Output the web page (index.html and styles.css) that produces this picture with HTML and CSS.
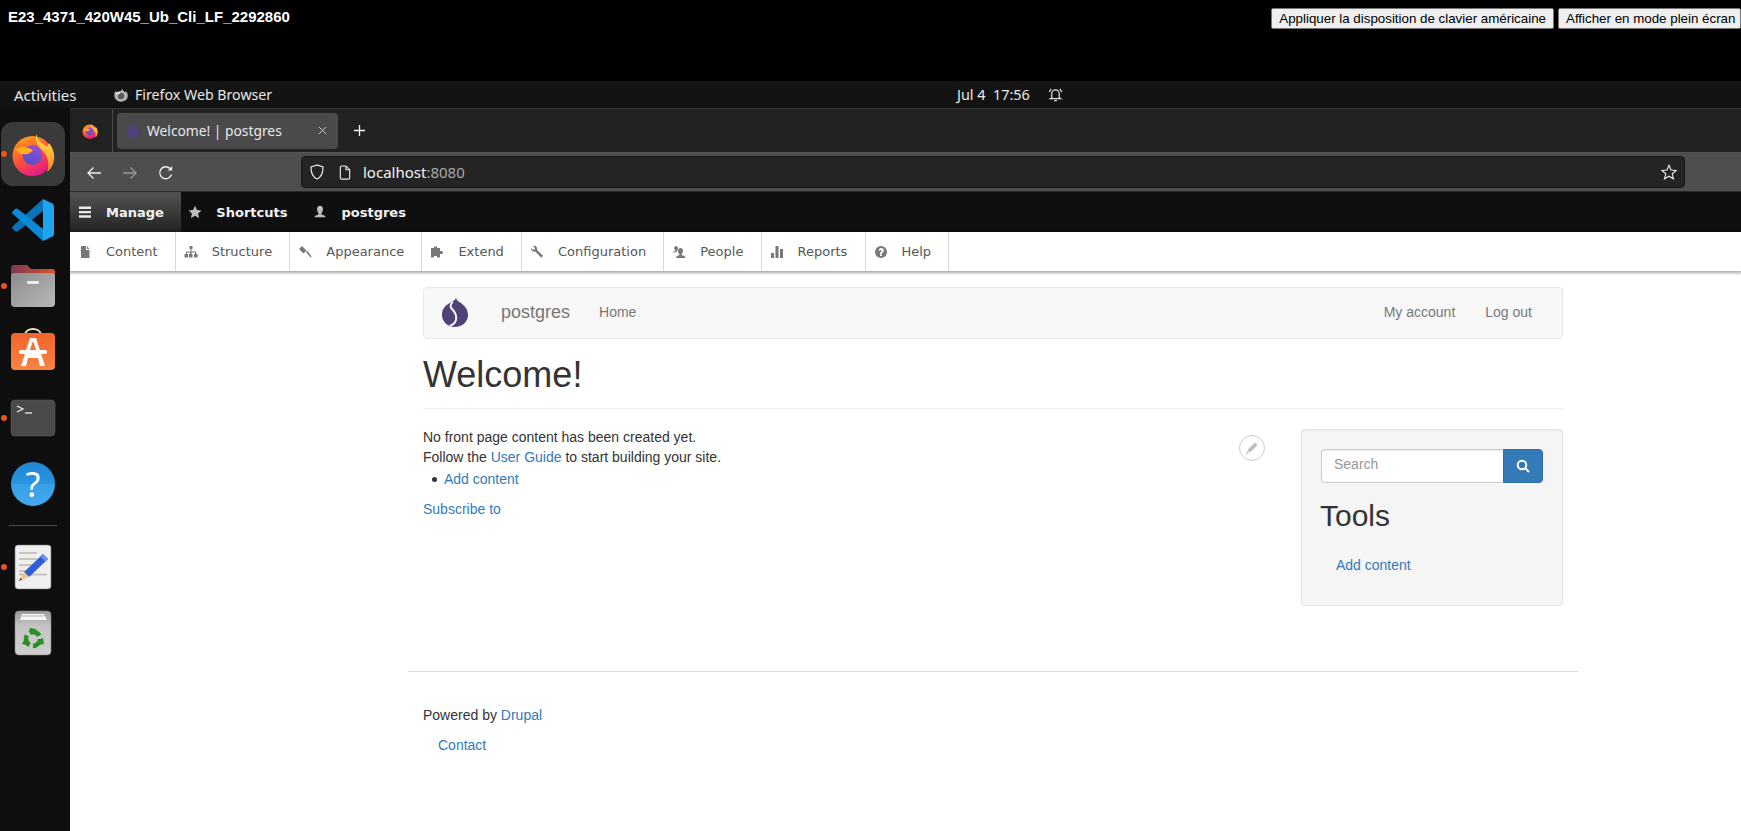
FILE: index.html
```html
<!DOCTYPE html>
<html lang="fr">
<head>
<meta charset="utf-8">
<title>Welcome! | postgres</title>
<link rel="stylesheet" href="styles.css">
</head>
<body>
<svg class="defs" width="0" height="0" aria-hidden="true">
  <defs>
    <linearGradient id="ffBody" x1="0.15" y1="0.1" x2="0.6" y2="1">
      <stop offset="0" stop-color="#ff9a1f"/><stop offset="0.5" stop-color="#ff4f3a"/><stop offset="1" stop-color="#e5178a"/>
    </linearGradient>
    <linearGradient id="ffFlame" x1="0.5" y1="0" x2="0.5" y2="1">
      <stop offset="0" stop-color="#ffe84a"/><stop offset="1" stop-color="#ff8a1f"/>
    </linearGradient>
    <linearGradient id="ffCore" x1="0.7" y1="0" x2="0.3" y2="1">
      <stop offset="0" stop-color="#9a4fd8"/><stop offset="1" stop-color="#4f4fc8"/>
    </linearGradient>
    <linearGradient id="folder" x1="0" y1="0" x2="1" y2="1">
      <stop offset="0" stop-color="#8c8c8c"/><stop offset="1" stop-color="#b8b8b8"/>
    </linearGradient>
    <linearGradient id="folderBack" x1="0" y1="0" x2="1" y2="0">
      <stop offset="0" stop-color="#7d3552"/><stop offset="1" stop-color="#d9562a"/>
    </linearGradient>
    <linearGradient id="store" x1="0" y1="0" x2="0" y2="1">
      <stop offset="0" stop-color="#f0652a"/><stop offset="1" stop-color="#f98345"/>
    </linearGradient>
    <linearGradient id="trash" x1="0" y1="0" x2="0" y2="1">
      <stop offset="0" stop-color="#9a9a9a"/><stop offset="0.35" stop-color="#c4c4c4"/><stop offset="1" stop-color="#cfcfcf"/>
    </linearGradient>
    <symbol id="firefox" viewBox="0 0 44 44">
      <circle cx="21.500" cy="24" r="20" fill="url(#ffBody)"/>
      <path d="M9 8c0 3 1 5 2 6 3-3 8-5 12-5l-3 8-16 2z" fill="#ff7a1f"/>
      <path d="M26 1c-1 5 2 8 6 11 2 1 4 3 4 3l2-4c4 5 6 11 5 17-1 5-3 9-7 12 3-8 1-16-5-22-4-4-8-9-5-17z" fill="url(#ffFlame)"/>
      <circle cx="21.500" cy="23" r="10" fill="url(#ffCore)"/>
      <path d="M5 17c5-3 13-2 17 1-2 3-6 5-10 4-3 0-6-2-7-5z" fill="#ffb01f"/>
    </symbol>
    <symbol id="drop" viewBox="0 0 26 30">
      <path d="M14 0c0 3 2 4 5 6 4 3 7 7 7 12 0 7-6 12-13 12S0 25 0 18C0 11 4 8 8 6c3-2 6-3 6-6z" fill="#4f4279"/>
      <path d="M11 5C8 7 8 10 10 12c3 3 5 6 4 11-1 3-3 5-6 5.500" fill="none" stroke="#f8f8f8" stroke-width="2"/>
    </symbol>
  </defs>
</svg>

<header class="banner">
  <div class="banner-title">E23_4371_420W45_Ub_Cli_LF_2292860</div>
  <div class="banner-actions">
    <button class="banner-btn" type="button">Appliquer la disposition de clavier américaine</button>
    <button class="banner-btn banner-btn-last" type="button">Afficher en mode plein écran</button>
  </div>
</header>

<div class="gnome-bar">
  <span class="activities">Activities</span>
  <span class="app-menu">
    <svg class="app-icon" viewBox="0 0 44 44"><path d="M26 2c1 6 6 8 10 12 1-2 1-3 1-5 5 6 7 12 6 18-1 10-10 16-21 16C10 43 1 35 1 23 1 17 3 12 6 9c0 3 1 4 2 5 4-4 15-3 18-12z" fill="#b5b5b5"/><circle cx="22" cy="25" r="10" fill="#5a5a5a"/><path d="M6 15c5-3 11-3 15 1-3 3-6 5-9 4-3 0-5-2-6-5z" fill="#e0e0e0"/></svg>
    Firefox Web Browser
  </span>
  <span class="clock">Jul 4&nbsp;&nbsp;17:56</span>
  <svg class="bell" viewBox="0 0 16 16" fill="none" stroke="#e6e6e6" stroke-width="1.300"><path d="M4 11.500V7a4 4 0 0 1 8 0v4.500l1.500 1h-11z"/><path d="M6.500 14.500h3"/><path d="M1.500 5.500C2 4 2.500 3 3.500 2M14.500 5.500C14 4 13.500 3 12.500 2"/></svg>
</div>

<div class="desktop">
  <nav class="dock">
    <div class="dock-item">
      <span class="dock-tile"><svg class="dock-ff"><use href="#firefox"/></svg></span>
      <i class="dock-dot"></i>
    </div>
    <div class="dock-item">
      <svg class="dock-icon" viewBox="-1 -1 44 44"><path d="M31 0v12L6 32q-2 1-3 0l-2-2q-2-2 0-3z" fill="#0a72b8"/><path d="M31 42V30L6 10q-2-1-3 0l-2 2q-2 2 0 3z" fill="#0b8ad8"/><path d="M31 0l9.500 4.500q1.500 1 1.500 2.500v28q0 1.500-1.500 2.500L31 42z" fill="#1fa5f0"/></svg>
    </div>
    <div class="dock-item">
      <svg class="dock-icon" viewBox="0 0 44 44"><path d="M0 4q0-3 3-3h13l4 4h21q3 0 3 3v14H0z" fill="url(#folderBack)"/><path d="M0 12q0-3 3-3h38q3 0 3 3v27q0 4-4 4H4q-4 0-4-4z" fill="url(#folder)"/><rect x="16" y="17" width="12" height="3" rx="1" fill="#eee"/></svg>
      <i class="dock-dot"></i>
    </div>
    <div class="dock-item">
      <svg class="dock-icon" viewBox="0 0 44 44"><path d="M14 5c0-8 16-8 16 0" fill="none" stroke="#f3e0b8" stroke-width="1.800"/><rect x="0" y="3" width="44" height="37" rx="4" fill="url(#store)"/><path d="M19 8h6l9 28h-5l-2-8H17l-2 8h-5zM18.500 21h7L22 11z" fill="#fff"/><rect x="8" y="20" width="28" height="4" rx="2" fill="#fff"/></svg>
    </div>
    <div class="dock-item">
      <svg class="dock-icon" viewBox="0 0 44 44"><rect x="0" y="4" width="44" height="36" rx="4" fill="#4a4a4a" stroke="#5a5a5a" stroke-width=".6"/><path d="M6 10l6 3-6 3" fill="none" stroke="#eee" stroke-width="1.300"/><path d="M14 17h7" stroke="#eee" stroke-width="1.300"/></svg>
      <i class="dock-dot"></i>
    </div>
    <div class="dock-item">
      <span class="help-badge">?</span>
    </div>
    <div class="dock-sep"></div>
    <div class="dock-item">
      <svg class="dock-icon" viewBox="0 0 44 44"><rect x="4" y="0" width="36" height="44" rx="3" fill="#efefef" stroke="#777" stroke-width=".6"/><path d="M8 8h18M8 14h18M8 20h16M8 26h12M8 29.500h28" stroke="#c9c5b8" stroke-width="1.800"/><path d="M32 9l5 5-19 18-5-5z" fill="#2f5fd8"/><path d="M32 9l5 5-2.500 2.500-5-5z" fill="#6f8fe8"/><path d="M13 27l5 5-10 4z" fill="#f2c58a"/><path d="M9.500 33l1.500 1.500L8 36z" fill="#333"/></svg>
      <i class="dock-dot"></i>
    </div>
    <div class="dock-item">
      <svg class="dock-icon" viewBox="0 0 44 44"><rect x="4" y="0" width="36" height="44" rx="4" fill="url(#trash)" stroke="#888" stroke-width=".6"/><path d="M9 9l2-6h22l3 6z" fill="#f7f7f7"/><path d="M11 5h22" stroke="#9a9a9a" stroke-width=".8"/><circle class="recycle" cx="22" cy="28" r="7"/><path d="M19 17l6 1-1 5-6-2zM11 33l3-6 4 3-2 4zM33 33l-6 1 0-5 5-2z" fill="#2a8f25"/></svg>
    </div>
  </nav>

  <div class="browser">
    <div class="tabbar">
      <div class="pinned"><svg class="pinned-icon"><use href="#firefox"/></svg></div>
      <div class="tab">
        <svg class="tab-favicon" viewBox="0 0 26 30"><path d="M14 0c0 3 2 4 5 6 4 3 7 7 7 12 0 7-6 12-13 12S0 25 0 18C0 11 4 8 8 6c3-2 6-3 6-6z" fill="#4f4279"/></svg>
        <span class="tab-title">Welcome! | postgres</span>
        <svg class="tab-close" viewBox="0 0 10 10" fill="none" stroke="#d8d8d8" stroke-width="1"><path d="M1 1l8 8M9 1l-8 8"/></svg>
      </div>
      <svg class="tab-new" viewBox="0 0 14 14" fill="none" stroke="#f0f0f0" stroke-width="1.400"><path d="M7 1v12M1 7h12"/></svg>
    </div>

    <div class="navbar">
      <svg class="nav-btn" viewBox="0 0 16 16" fill="none" stroke="#f0f0f0" stroke-width="1.300"><path d="M15 8H2M7.500 2.500 2 8l5.500 5.500"/></svg>
      <svg class="nav-btn nav-btn-off" viewBox="0 0 16 16" fill="none" stroke="#9a9a9a" stroke-width="1.300"><path d="M1 8h13M8.500 2.500 14 8l-5.500 5.500"/></svg>
      <svg class="nav-btn" viewBox="0 0 16 16" fill="none" stroke="#f0f0f0" stroke-width="1.300"><path d="M13.500 9.500A6 6 0 1 1 12 3.500"/><path d="M14.200 1v4.500H9.700z" fill="#f0f0f0" stroke="none"/></svg>
      <div class="urlbar">
        <svg class="url-shield" viewBox="0 0 16 16" fill="none" stroke="#ededed" stroke-width="1.200"><path d="M8 1 2 3c0 6 1 10 6 12 5-2 6-6 6-12z"/></svg>
        <svg class="url-page" viewBox="0 0 14 16" fill="none" stroke="#ededed" stroke-width="1.200"><path d="M2 2.500q0-1.500 1.500-1.500H8l4 4v8.500q0 1.500-1.500 1.500h-7Q2 15 2 13.500z"/><path d="M8 1v4h4" /></svg>
        <span class="url-text">localhost<span class="url-port">:8080</span></span>
        <svg class="url-star" viewBox="0 0 16 16" fill="none" stroke="#ededed" stroke-width="1.100"><path d="M8 1.300 10 6l5.200.4-4 3.400 1.300 5L8 12.200 3.500 14.800l1.300-5-4-3.400L6 6z"/></svg>
      </div>
    </div>

    <div class="page">
      <div class="toolbar">
        <a class="tb-tab tb-tab-active">
          <svg class="tb-icon" viewBox="0 0 14 14"><path d="M1 1.500h12v2.400H1zM1 5.900h12v2.400H1zM1 10.300h12v2.400H1z" fill="#e8e8e8"/></svg>Manage
        </a>
        <a class="tb-tab">
          <svg class="tb-icon" viewBox="0 0 14 14"><path d="M7 .8 8.900 5l4.600.5-3.400 3.100 1 4.600L7 10.800 2.900 13.200l1-4.600L.5 5.500 5.100 5z" fill="#bdbdbd"/></svg>Shortcuts
        </a>
        <a class="tb-tab">
          <svg class="tb-icon" viewBox="0 0 14 14"><path d="M7 .8c2 0 3 1.500 3 3.500 0 1.500-.7 3-1.500 3.700v1.500c2 .5 4 1 4 2.700H1.500c0-1.700 2-2.200 4-2.700V8C4.700 7.300 4 5.800 4 4.300 4 2.300 5 .8 7 .8z" fill="#bdbdbd"/></svg>postgres
        </a>
      </div>
      <div class="tray">
        <a class="tray-item">
          <svg class="tray-icon" viewBox="0 0 14 14"><path d="M3 1h5v4h3.500v8H3zM9 1l2.500 3H9z" fill="#787878"/></svg>Content
        </a>
        <a class="tray-item">
          <svg class="tray-icon" viewBox="0 0 14 14"><path d="M5.500 1h3v3h-1v2.500h4.500V9h1.500v3.500h-3.500V9h1V7.500h-3.500V9h1v3.500h-3.500V9h1V7.500H3V9h1v3.500H.5V9H2V6.500h4.500V4h-1z" fill="#787878"/></svg>Structure
        </a>
        <a class="tray-item">
          <svg class="tray-icon" viewBox="0 0 14 14"><path d="M1 4l3-3 4.500 4.500-3 3zM8 7l1.300-1.300 4.200 5.800-1 1z" fill="#787878"/></svg>Appearance
        </a>
        <a class="tray-item">
          <svg class="tray-icon" viewBox="0 0 14 14"><path d="M1 3h3V1.500h3V3h3v3h1.500a1.500 1.500 0 0 1 0 3H10v3.500H7V11H4v1.500H1z" fill="#787878"/></svg>Extend
        </a>
        <a class="tray-item">
          <svg class="tray-icon" viewBox="0 0 14 14"><path d="M1.200 3 3 4.800l1.600-.2.300-1.700L3.100 1c2-.7 4 .7 4 2.800 0 .4 0 .7-.2 1l6.200 6-1.800 1.900-6-6.200C3.200 7.100.6 5.500 1.200 3z" fill="#787878"/></svg>Configuration
        </a>
        <a class="tray-item">
          <svg class="tray-icon" viewBox="0 0 14 14"><path d="M4 1c1.300 0 2 1 2 2.300 0 1-.5 2-1 2.400v1c-2 .3-3.700.8-3.700 2V7.200c0-.7 1.400-1 2-1.200v-.7C2.800 4.900 2.300 4 2.300 3.200 2.300 2 3 1 4 1zM8.500 3c1.500 0 2.500 1.300 2.500 3 0 1.200-.6 2.500-1.300 3v1.200c1.900.4 3.800.9 3.800 2.800H4c0-1.900 1.900-2.400 3.300-2.800V9C6.600 8.500 6 7.200 6 6c0-1.700 1-3 2.500-3z" fill="#787878"/></svg>People
        </a>
        <a class="tray-item">
          <svg class="tray-icon" viewBox="0 0 14 14"><path d="M1 8h3v5H1zM5.500 1h3v12h-3zM10 4h3v9h-3z" fill="#787878"/></svg>Reports
        </a>
        <a class="tray-item">
          <svg class="tray-icon" viewBox="0 0 14 14"><path fill-rule="evenodd" d="M7 1a6 6 0 1 1 0 12A6 6 0 0 1 7 1zM6 9.500v1.600h2V9.500zM4.600 5.400l1.500.4c.1-.5.400-.8.900-.8s.8.300.8.700c0 .8-1.800 1-1.800 2.800V9h2v-.4c0-1 1.900-1.300 1.900-3.100C9.900 4 8.600 3 7 3 5.700 3 4.800 4 4.600 5.400z" fill="#787878"/></svg>Help
        </a>
      </div>

      <div class="site">
        <div class="container">
          <div class="site-nav">
            <svg class="site-logo"><use href="#drop"/></svg>
            <a class="site-name">postgres</a>
            <a class="site-link">Home</a>
            <span class="site-nav-right">
              <a class="site-link">My account</a>
              <a class="site-link">Log out</a>
            </span>
          </div>
          <h1 class="page-title">Welcome!</h1>
          <div class="columns">
            <section class="main-col">
              <a class="edit-btn" aria-label="Edit"><svg class="edit-icon" viewBox="0 0 14 14"><path d="M10 1.500 12.500 4l-7.500 7.500-2.500-2.500zM2 10l2 2-3 1z" fill="#bdbdbd"/></svg></a>
              <p class="lead">No front page content has been created yet.<br>Follow the <a class="link">User Guide</a> to start building your site.</p>
              <ul class="bullets"><li class="bullet"><a class="link">Add content</a></li></ul>
              <a class="link">Subscribe to</a>
            </section>
            <aside class="well">
              <form class="search">
                <input class="search-input" type="text" placeholder="Search">
                <button class="search-btn" type="button" aria-label="Search"><svg class="search-icon" viewBox="0 0 14 14" fill="none" stroke="#fff" stroke-width="2"><circle cx="6" cy="6" r="4.300"/><path d="M9 9l4 4"/></svg></button>
              </form>
              <h2 class="well-title">Tools</h2>
              <a class="link well-link">Add content</a>
            </aside>
          </div>
        </div>
        <footer class="footer">
          <p class="powered">Powered by <a class="link">Drupal</a></p>
          <a class="link footer-link">Contact</a>
        </footer>
      </div>
    </div>
  </div>
</div>
</body>
</html>
```
FILE: styles.css
```css
* { box-sizing: border-box; }
html, body { margin: 0; height: 100%; overflow: hidden; background: #000; }
body { display: flex; flex-direction: column; width: 1741px; height: 831px; font-family: "Liberation Sans", Arial, sans-serif; }
.defs { position: absolute; }

/* banner */
.banner { height: 81px; background: #000; display: flex; justify-content: space-between; align-items: flex-start; flex: none; }
.banner-title { color: #fff; font-weight: bold; font-size: 15px; line-height: 17px; padding: 8px 0 0 8px; }
.banner-actions { display: flex; gap: 4px; padding-top: 8px; }
.banner-btn { height: 21px; padding: 0 7px; font: 13.333px "Liberation Sans", Arial, sans-serif; color: #000; background: #efefef; border: 1px solid #767676; border-radius: 2px; white-space: nowrap; }
.banner-btn-last { width: 183px; text-align: left; }

/* gnome */
.gnome-bar { height: 27px; flex: none; background: #131313; color: #e8e8e8; display: flex; align-items: center; font: 14.200px "Noto Sans", sans-serif; }
.activities { margin-left: 14px; width: 100px; font-size: 15px; }
.app-menu { display: flex; align-items: center; gap: 7px; width: 0; white-space: nowrap; }
.app-icon { width: 14px; height: 14px; flex: none; }
.clock { margin-left: 843px; width: 91px; white-space: nowrap; font-size: 14.400px; }
.bell { width: 15px; height: 15px; }

/* dock + browser */
.desktop { flex: 1; display: flex; min-height: 0; }
.dock { width: 70px; flex: none; background: #0e0e0e; padding-top: 13px; display: flex; flex-direction: column; }
.dock-item { position: relative; height: 66px; flex: none; padding-right: 4px; display: flex; align-items: center; justify-content: center; }
.dock-tile { width: 64px; height: 64px; border-radius: 12px; background: #3a3a3a; display: flex; align-items: center; justify-content: center; }
.dock-ff { width: 44px; height: 44px; }
.dock-icon { width: 44px; height: 44px; overflow: visible; }
.dock-dot { position: absolute; left: 1px; top: 30px; width: 6px; height: 6px; border-radius: 50%; background: #e95420; }
.dock-sep { height: 17px; flex: none; padding: 8px 13px 8px 9px; }
.dock-sep::before { content: ""; display: block; height: 1px; background: #4a4a4a; }
.help-badge { width: 44px; height: 44px; border-radius: 50%; background: linear-gradient(#2087d6, #2a94e0 50%, #379fe6 50%, #45a9ee); color: #fff; font: 34px/44px "Noto Sans", sans-serif; text-align: center; }
.recycle { fill: none; stroke: #2a8f25; stroke-width: 4.500; stroke-dasharray: 11 3.660; }

.browser { flex: 1; min-width: 0; display: flex; flex-direction: column; background: #fff; }
.tabbar { height: 44px; flex: none; background: #222; border-top: 1px solid #333; display: flex; align-items: center; }
.pinned { width: 43px; height: 100%; padding-right: 2px; border-right: 1px solid #4a4a4a; display: flex; align-items: center; justify-content: center; }
.pinned-icon { width: 16px; height: 16px; }
.tab { width: 221px; height: 36px; margin-left: 4px; background: #4a4a4a; border-radius: 4px; display: flex; align-items: center; padding: 0 11px 0 9px; color: #e8e8e8; font: 13.800px "Noto Sans", sans-serif; }
.tab-favicon { width: 14px; height: 15px; flex: none; }
.tab-title { margin-left: 7px; flex: 1; white-space: nowrap; }
.tab-close { width: 9px; height: 9px; flex: none; }
.tab-new { width: 13px; height: 13px; margin-left: 15px; }

.navbar { height: 40px; flex: none; background: #4e4e4e; border-top: 1px solid #555; border-bottom: 1px solid #2a2a2a; display: flex; align-items: center; padding-left: 16px; }
.nav-btn { width: 16px; height: 16px; margin: 1px 20px 0 0; flex: none; }
.urlbar { width: 1384px; height: 32px; margin-left: 107px; background: #242424; border: 1px solid #181818; border-radius: 4px; display: flex; align-items: center; padding: 0 7px; color: #f4f4f4; font: 15px "Noto Sans", sans-serif; }
.url-shield { width: 16px; height: 16px; margin-right: 13px; flex: none; }
.url-page { width: 14px; height: 15px; margin-right: 11px; flex: none; }
.url-text { flex: 1; }
.url-port { color: #a8a8a8; }
.url-star { width: 16px; height: 16px; flex: none; }

.page { flex: 1; min-height: 0; background: #fff; overflow: hidden; }

/* admin toolbar */
.toolbar { height: 40px; background: #0f0f0f; display: flex; font: bold 13px "DejaVu Sans", Verdana, sans-serif; color: #f2f2f2; }
.tb-tab { display: flex; align-items: center; padding: 0 18.500px 0 7.500px; gap: 14px; }
.tb-tab-active { background: linear-gradient(#4f4f4f 10%, #222); padding: 0 17px 0 8px; }
.tb-icon { width: 14px; height: 14px; flex: none; }
.tray { height: 39px; width: 100%; background: #fff; display: flex; position: relative; box-shadow: 0 1px 3px 1px rgba(0,0,0,.35); font: 13px "DejaVu Sans", Verdana, sans-serif; color: #565656; }
.tray-item { display: flex; align-items: center; padding: 0 17.200px 0 8px; gap: 13.900px; border-right: 1px solid #d8d8d8; }
.tray-icon { width: 14px; height: 14px; flex: none; }

/* site */
.site { width: 1846px; padding-left: 338px; color: #333; font-size: 14px; line-height: 20px; }
.container { width: 1170px; padding: 16px 15px 0; }
.site-nav { height: 52px; background: #f8f8f8; border: 1px solid #e7e7e7; border-radius: 4px; display: flex; align-items: center; padding: 0 0 2px 18px; color: #777; }
.site-logo { width: 26px; height: 30px; flex: none; }
.site-name { font-size: 18px; margin: 0 -1px 0 33px; }
.site-link { margin-left: 30px; }
.site-nav-right { margin-left: auto; padding-right: 30px; display: flex; }
.page-title { margin: 0; height: 70px; padding-top: 16px; font-size: 36px; line-height: 40px; font-weight: 500; border-bottom: 1px solid #eee; }
.columns { display: flex; padding-top: 18px; }
.main-col { width: 877px; position: relative; }
.lead { margin: 0; }
.bullets { margin: 0; padding: 0 0 0 21px; list-style: none; }
.bullet { position: relative; margin-top: 2px; }
.bullet::before { content: ""; position: absolute; left: -12px; top: 8px; width: 5px; height: 5px; border-radius: 50%; background: #333; }
.link { color: #337ab7; }
.main-col > .link { display: block; margin-top: 10px; }
.edit-btn { position: absolute; right: 35px; top: 8px; width: 26px; height: 26px; border: 1px solid #ccc; border-radius: 50%; background: #fff; display: flex; align-items: center; justify-content: center; }
.edit-icon { width: 14px; height: 14px; }
.well { margin: 2px 0 0 1px; width: 262px; height: 177px; background: #f5f5f5; border: 1px solid #e3e3e3; border-radius: 4px; padding: 19px; box-shadow: inset 0 1px 1px rgba(0,0,0,.05); }
.search { display: flex; margin: 0; }
.search-input { width: 182px; height: 34px; border: 1px solid #ccc; border-right: 0; border-radius: 4px 0 0 4px; padding: 4px 12px 8px; font: 14px "Liberation Sans", Arial, sans-serif; color: #555; background: #fff; box-shadow: inset 0 1px 1px rgba(0,0,0,.075); }
.search-input::placeholder { color: #999; opacity: 1; }
.search-btn { width: 40px; height: 34px; padding: 0; background: #337ab7; border: 1px solid #2e6da4; border-radius: 0 4px 4px 0; display: flex; align-items: center; justify-content: center; }
.search-icon { width: 14px; height: 14px; }
.well-title { margin: 16px 0 0 -1px; font-size: 30px; line-height: 33px; font-weight: 500; }
.well-link { display: block; margin: 23px 0 0 15px; }
.footer { width: 1170px; margin-top: 65px; border-top: 1px solid #ddd; padding: 33px 15px 0; }
.powered { margin: 0; }
.footer-link { display: block; margin: 10px 0 0 15px; }
```
